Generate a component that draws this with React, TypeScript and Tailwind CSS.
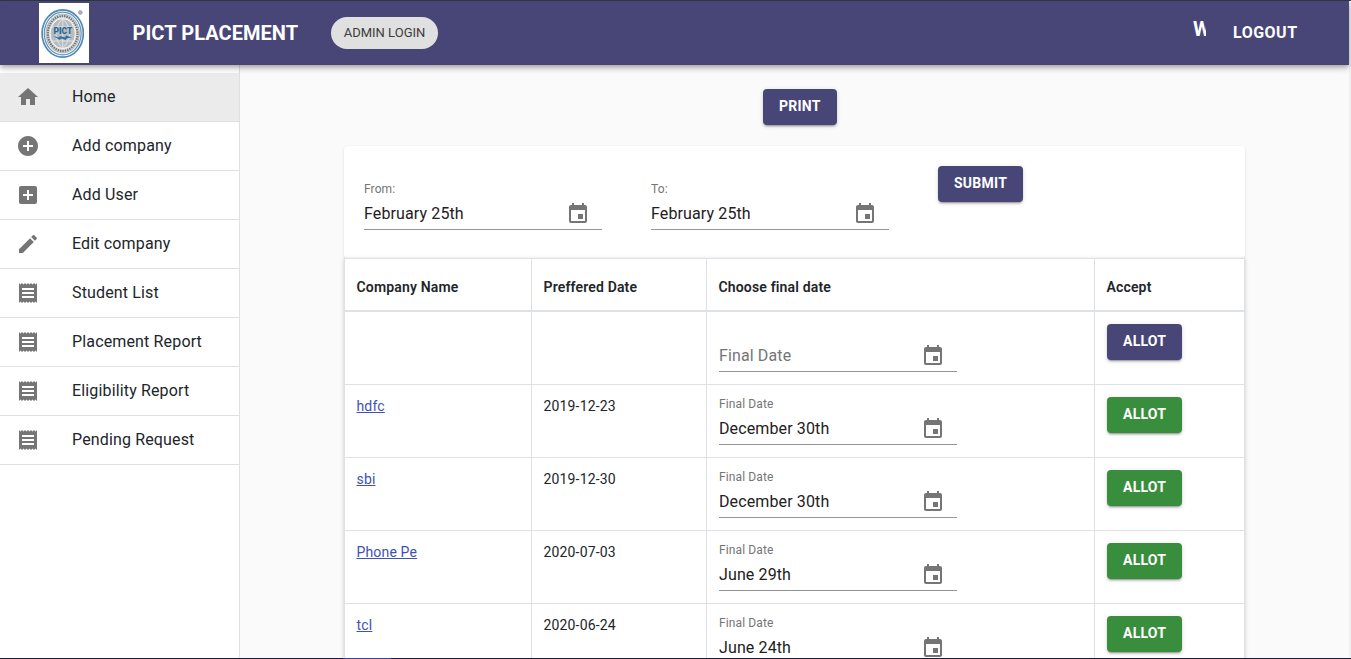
import React from "react";

const paths = {
  home: "M10 20v-6h4v6h5v-8h3L12 3 2 12h3v8z",
  addCircle:
    "M12 2C6.48 2 2 6.48 2 12s4.48 10 10 10 10-4.48 10-10S17.52 2 12 2zm5 11h-4v4h-2v-4H7v-2h4V7h2v4h4v2z",
  addBox:
    "M19 3H5c-1.11 0-2 .9-2 2v14c0 1.1.89 2 2 2h14c1.1 0 2-.9 2-2V5c0-1.1-.9-2-2-2zm-2 10h-4v4h-2v-4H7v-2h4V7h2v4h4v2z",
  edit: "M3 17.25V21h3.75L17.81 9.94l-3.75-3.75L3 17.25zM20.71 7.04c.39-.39.39-1.02 0-1.41l-2.34-2.34c-.39-.39-1.02-.39-1.41 0l-1.83 1.83 3.75 3.75 1.83-1.83z",
  receipt:
    "M18 17H6v-2h12v2zm0-4H6v-2h12v2zm0-4H6V7h12v2zM3 22l1.5-1.5L6 22l1.5-1.5L9 22l1.5-1.5L12 22l1.5-1.5L15 22l1.5-1.5L18 22l1.5-1.5L21 22V2l-1.5 1.5L18 2l-1.5 1.5L15 2l-1.5 1.5L12 2l-1.5 1.5L9 2 7.5 3.5 6 2 4.5 3.5 3 2v20z",
  event:
    "M17 12h-5v5h5v-5zM16 1v2H8V1H6v2H5c-1.11 0-1.99.9-1.99 2L3 19c0 1.1.89 2 2 2h14c1.1 0 2-.9 2-2V5c0-1.1-.9-2-2-2h-1V1h-2zm3 18H5V8h14v11z",
};

function Icon({ name }: { name: keyof typeof paths }) {
  return (
    <svg viewBox="0 0 24 24" className="size-6 shrink-0 fill-[#757575]">
      <path d={paths[name]} />
    </svg>
  );
}

const menu: { label: string; icon: keyof typeof paths }[] = [
  { label: "Home", icon: "home" },
  { label: "Add company", icon: "addCircle" },
  { label: "Add User", icon: "addBox" },
  { label: "Edit company", icon: "edit" },
  { label: "Student List", icon: "receipt" },
  { label: "Placement Report", icon: "receipt" },
  { label: "Eligibility Report", icon: "receipt" },
  { label: "Pending Request", icon: "receipt" },
];

const rows = [
  { name: "", date: "", final: "" },
  { name: "hdfc", date: "2019-12-23", final: "December 30th" },
  { name: "sbi", date: "2019-12-30", final: "December 30th" },
  { name: "Phone Pe", date: "2020-07-03", final: "June 29th" },
  { name: "tcl", date: "2020-06-24", final: "June 24th" },
];

function Logo() {
  return (
    <svg viewBox="0 0 50 60" className="h-[60px] w-[50px] bg-white">
      <g fill="none">
        <ellipse cx="23.7" cy="30.5" rx="20.6" ry="23.6" stroke="#4f8ab5" strokeWidth="1.7" />
        <ellipse cx="23.7" cy="30.5" rx="18.4" ry="21.3" stroke="#6496bb" strokeWidth="1.3" />
        <ellipse cx="23.7" cy="30.5" rx="16.7" ry="19.4" fill="#e2e2e2" stroke="#9ea8af" strokeWidth="0.9" />
        <ellipse cx="23.7" cy="30.5" rx="14.8" ry="17.4" stroke="#74787b" strokeWidth="2.2" strokeDasharray="1.6 0.8" />
        <ellipse cx="23.7" cy="30.5" rx="12.6" ry="15" fill="#b9bcbe" stroke="#f7f7f7" strokeWidth="1" />
        <path
          d="M23.7 16v29M12 24h24M12 38h24M23.7 16c-9 8-9 21 0 29M23.7 16c9 8 9 21 0 29"
          stroke="#e4e6e7"
          strokeWidth="0.9"
        />
        <circle cx="41.3" cy="9.5" r="1.8" fill="#b5b5b5" stroke="#9a9a9a" strokeWidth="1" />
      </g>
      <text
        x="23.9"
        y="30.6"
        textAnchor="middle"
        textLength="18.6"
        lengthAdjust="spacingAndGlyphs"
        fontFamily="Roboto, sans-serif"
        fontWeight="900"
        fontSize="9"
        fill="#27679b"
      >
        PICT
      </text>
      <path d="M14 33l6 1.5 1-1.5 5 1.5 1-2 6 2-5 .8-1.5 1.6-4-1.4-2 1.2z" fill="#2f6fa2" />
    </svg>
  );
}

function Btn({ children, green }: { children: string; green?: boolean }) {
  return (
    <button
      className={`flex h-9 items-center rounded px-4 pb-[2px] text-[14px] font-bold tracking-[0.25px] text-white shadow-[0_3px_1px_-2px_rgba(0,0,0,0.2),0_2px_2px_0_rgba(0,0,0,0.14),0_1px_5px_0_rgba(0,0,0,0.12)] ${
        green ? "bg-[#388e3c]" : "bg-[#474677]"
      }`}
    >
      {children}
    </button>
  );
}

function DateField({ label, value }: { label: string; value: string }) {
  return (
    <div className="flex h-12 w-[238px] flex-col border-b border-[#949494]">
      <div className="h-4 text-[12px] leading-[15px] tracking-[0.11px] text-[#757575]">
        {value ? label : ""}
      </div>
      <div className="flex h-[31px] items-center justify-between pr-3">
        <span
          className={`text-[16px] leading-[19px] tracking-[0.12px] ${value ? "text-[#212121]" : "text-[#757575]"}`}
        >
          {value || label}
        </span>
        <Icon name="event" />
      </div>
    </div>
  );
}

export default function App() {
  return (
    <div className="flex h-[659px] w-[1351px] flex-col overflow-hidden bg-[#fafafa] font-['Roboto',sans-serif] text-[#212529]">
      <div className="h-px shrink-0 bg-[#2f3b42]" />
      <div className="flex min-h-0 flex-1">
        <div className="flex w-[1349px] flex-col">
          <header className="relative z-10 flex h-16 shrink-0 items-center bg-[#474677] pl-[39px] text-white shadow-[0_2px_4px_-1px_rgba(0,0,0,0.2),0_4px_5px_0_rgba(0,0,0,0.14),0_1px_10px_0_rgba(0,0,0,0.12)]">
            <Logo />
            <h1 className="ml-[43.5px] w-[198.5px] text-[20px] font-bold tracking-[0.06px] whitespace-nowrap">
              PICT PLACEMENT
            </h1>
            <div className="flex h-8 w-[107px] items-center justify-center rounded-full bg-[#e0e0e0] text-[13px] whitespace-nowrap text-[#3c3c3c]">
              ADMIN LOGIN
            </div>
            <div className="ml-[755px] w-[13px] overflow-hidden pb-[8px] text-[20px] leading-6 font-bold whitespace-nowrap">
              W
            </div>
            <div className="ml-[27px] text-[16px] font-bold tracking-[0.5px]">LOGOUT</div>
          </header>

          <div className="flex min-h-0 flex-1">
            <nav className="w-60 shrink-0 border-r border-[#e0e0e0] bg-white pt-2">
              {menu.map((m, i) => (
                <div
                  key={m.label}
                  className={`flex h-[49px] items-center border-b border-[#e0e0e0] pl-4 ${i === 0 ? "bg-[#ebebeb]" : ""}`}
                >
                  <Icon name={m.icon} />
                  <span className="ml-8 pb-px text-[16px] tracking-[0.15px]">{m.label}</span>
                </div>
              ))}
            </nav>

            <main className="flex flex-1 flex-col pt-6 pl-[104px]">
              <div className="ml-[419px] flex">
                <Btn>PRINT</Btn>
              </div>
              <section className="mt-[21px] flex h-[112px] w-[901px] shrink-0 items-start rounded bg-white pt-5 pl-5 shadow-[0_1px_3px_0_rgba(0,0,0,0.12)]">
                <div className="mt-4">
                  <DateField label="From:" value="February 25th" />
                </div>
                <div className="mt-4 mr-[49px] ml-[49px]">
                  <DateField label="To:" value="February 25th" />
                </div>
                <Btn>SUBMIT</Btn>
              </section>
              <section className="w-[901px] border-t border-r border-[#dee2e6] bg-white text-[14px] shadow-[0_1px_4px_0_rgba(0,0,0,0.2)]">
                <div className="grid h-[53px] grid-cols-[187px_175px_388px_150px] border-b-2 border-[#dee2e6] font-semibold tracking-[0.16px]">
                  {["Company Name", "Preffered Date", "Choose final date", "Accept"].map((h) => (
                    <div key={h} className="flex items-center border-l border-[#dee2e6] pt-[5px] pl-[11.5px]">
                      {h}
                    </div>
                  ))}
                </div>
                {rows.map((r, i) => (
                  <div
                    key={i}
                    className="grid h-[73px] grid-cols-[187px_175px_388px_150px] border-b border-[#dee2e6] tracking-[0.16px]"
                  >
                    <div className="border-l border-[#dee2e6] pt-[11px] pl-[11.5px]">
                      <a className="text-[#3f51b5] underline">{r.name}</a>
                    </div>
                    <div className="border-l border-[#dee2e6] pt-[11px] pl-[11.5px]">{r.date}</div>
                    <div className="border-l border-[#dee2e6] pt-3 pl-3">
                      <DateField label="Final Date" value={r.final} />
                    </div>
                    <div className="flex items-start border-l border-[#dee2e6] pt-3 pl-3">
                      <Btn green={i > 0}>ALLOT</Btn>
                    </div>
                  </div>
                ))}
              </section>
            </main>
          </div>
        </div>
        <div className="w-[2px] bg-[#f1f1f1]" />
      </div>
      <div className="flex h-px shrink-0 bg-[#1d1943] pl-[343px]">
        <div className="w-12 bg-[#403d92]" />
      </div>
    </div>
  );
}
